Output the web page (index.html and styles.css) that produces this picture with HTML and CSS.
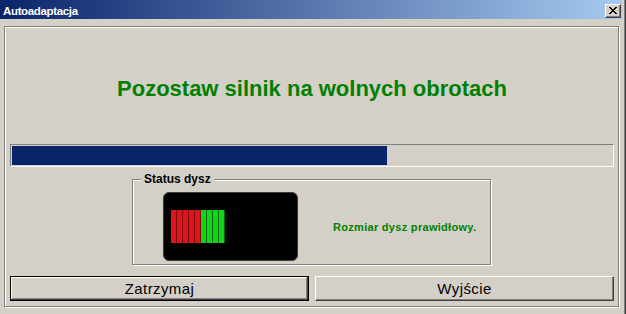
FILE: index.html
```html
<!DOCTYPE html>
<html lang="pl">
<head>
<meta charset="utf-8">
<title>Autoadaptacja</title>
<link rel="stylesheet" href="styles.css">
</head>
<body>
<div class="window">
  <div class="titlebar">
    <span class="title">Autoadaptacja</span>
    <button class="close" aria-label="Zamknij">
      <svg width="8" height="7" viewBox="0 0 8 7" shape-rendering="crispEdges">
        <path fill="#000" d="M0 0h2v1H0zM6 0h2v1H6zM1 1h2v1H1zM5 1h2v1H5zM2 2h4v1H2zM3 3h2v1H3zM2 4h4v1H2zM1 5h2v1H1zM5 5h2v1H5zM0 6h2v1H0zM6 6h2v1H6z"/>
      </svg>
    </button>
  </div>
  <div class="panel">
    <div class="message">Pozostaw silnik na wolnych obrotach</div>
    <div class="progress"><div class="progress-fill" style="width:375px"></div></div>
    <div class="group">
      <span class="group-label">Status dysz</span>
      <div class="display">
        <div class="bars">
          <span class="bar red"></span><span class="bar red"></span><span class="bar red"></span><span class="bar red"></span><span class="bar red"></span><span class="bar green"></span><span class="bar green"></span><span class="bar green"></span><span class="bar green"></span>
        </div>
      </div>
      <div class="status-text">Rozmiar dysz prawidłowy.</div>
    </div>
    <div class="buttons">
      <button class="btn default">Zatrzymaj</button>
      <button class="btn">Wyjście</button>
    </div>
  </div>
</div>
</body>
</html>
```
FILE: styles.css
```css
html, body {
  margin: 0;
  padding: 0;
}
body {
  background: #d4d0c8;
  font-family: "Liberation Sans", Arial, sans-serif;
}
.window {
  width: 626px;
  height: 314px;
  box-sizing: border-box;
  border-right: 1px solid #404040;
  box-shadow: inset -1px 0 0 #808080;
  overflow: hidden;
}
.titlebar {
  width: 622px;
  height: 19px;
  box-sizing: border-box;
  padding: 0 1px 0 3px;
  background: linear-gradient(to right, #0a246a, #a6caf0);
  display: flex;
  justify-content: space-between;
  align-items: center;
}
.title {
  color: #fff;
  font-weight: bold;
  font-size: 11.5px;
  letter-spacing: -0.35px;
  padding-top: 2px;
}
.close {
  align-self: flex-end;
  margin: 0 0 1px 0;
  width: 16px;
  height: 14px;
  padding: 0 1px 1px 0;
  background: #d4d0c8;
  border: 1px solid;
  border-color: #fff #404040 #404040 #fff;
  box-shadow: inset -1px -1px 0 #808080;
  display: flex;
  align-items: center;
  justify-content: center;
  box-sizing: border-box;
}
.close svg {
  display: block;
}
.panel {
  margin: 7px 0 0 4px;
  width: 615px;
  height: 281px;
  box-sizing: border-box;
  border: 1px solid #808080;
  box-shadow: 1px 1px 0 #fff, inset 1px 1px 0 #fff;
  padding: 0 4px 0 5px;
}
.message {
  height: 117px;
  box-sizing: border-box;
  padding-top: 49px;
  text-align: center;
  line-height: 25px;
  font-size: 22px;
  font-weight: bold;
  color: #008000;
}
.progress {
  height: 23px;
  box-sizing: border-box;
  border: 1px solid;
  border-color: #808080 #fff #fff #808080;
  padding: 1px;
}
.progress-fill {
  height: 19px;
  background: #0a246a;
}
.group {
  position: relative;
  margin: 12px 0 0 122px;
  width: 359px;
  height: 86px;
  box-sizing: border-box;
  border: 1px solid #808080;
  box-shadow: 1px 1px 0 #fff, inset 1px 1px 0 #fff;
  padding: 12px 0 0 30px;
  display: flex;
  align-items: flex-start;
}
.group-label {
  position: absolute;
  top: -8px;
  left: 8px;
  padding: 0 3px;
  background: #d4d0c8;
  font-size: 12px;
  font-weight: bold;
  line-height: 15px;
  color: #000;
}
.display {
  width: 135px;
  height: 69px;
  box-sizing: border-box;
  background: #000;
  border: 1px solid #3c3c3c;
  border-radius: 6px;
  padding: 17px 0 0 7px;
}
.bars {
  display: flex;
  height: 33px;
}
.bar {
  width: 5px;
  height: 33px;
  border-right: 1px solid;
}
.bar.red {
  background: #e0141c;
  border-color: #7a0a0a;
}
.bar.green {
  background: #12d41a;
  border-color: #0a6a0a;
}
.status-text {
  margin: 29px 0 0 35px;
  font-size: 11px;
  font-weight: bold;
  letter-spacing: 0.3px;
  color: #008000;
  line-height: 13px;
}
.buttons {
  margin-top: 11px;
  display: grid;
  grid-template-columns: 299px 299px;
  gap: 6px;
}
.btn {
  height: 25px;
  margin: 0;
  padding: 0;
  background: #d4d0c8;
  font-family: "Liberation Sans", Arial, sans-serif;
  font-size: 15px;
  letter-spacing: 0.4px;
  color: #000;
  border: 1px solid;
  border-color: #fff #404040 #404040 #fff;
  box-shadow: inset -1px -1px 0 #808080;
  box-sizing: border-box;
}
.btn.default {
  border-color: #000;
  box-shadow: inset -1px -1px 0 #404040, inset 1px 1px 0 #fff, inset -2px -2px 0 #808080;
}
```
